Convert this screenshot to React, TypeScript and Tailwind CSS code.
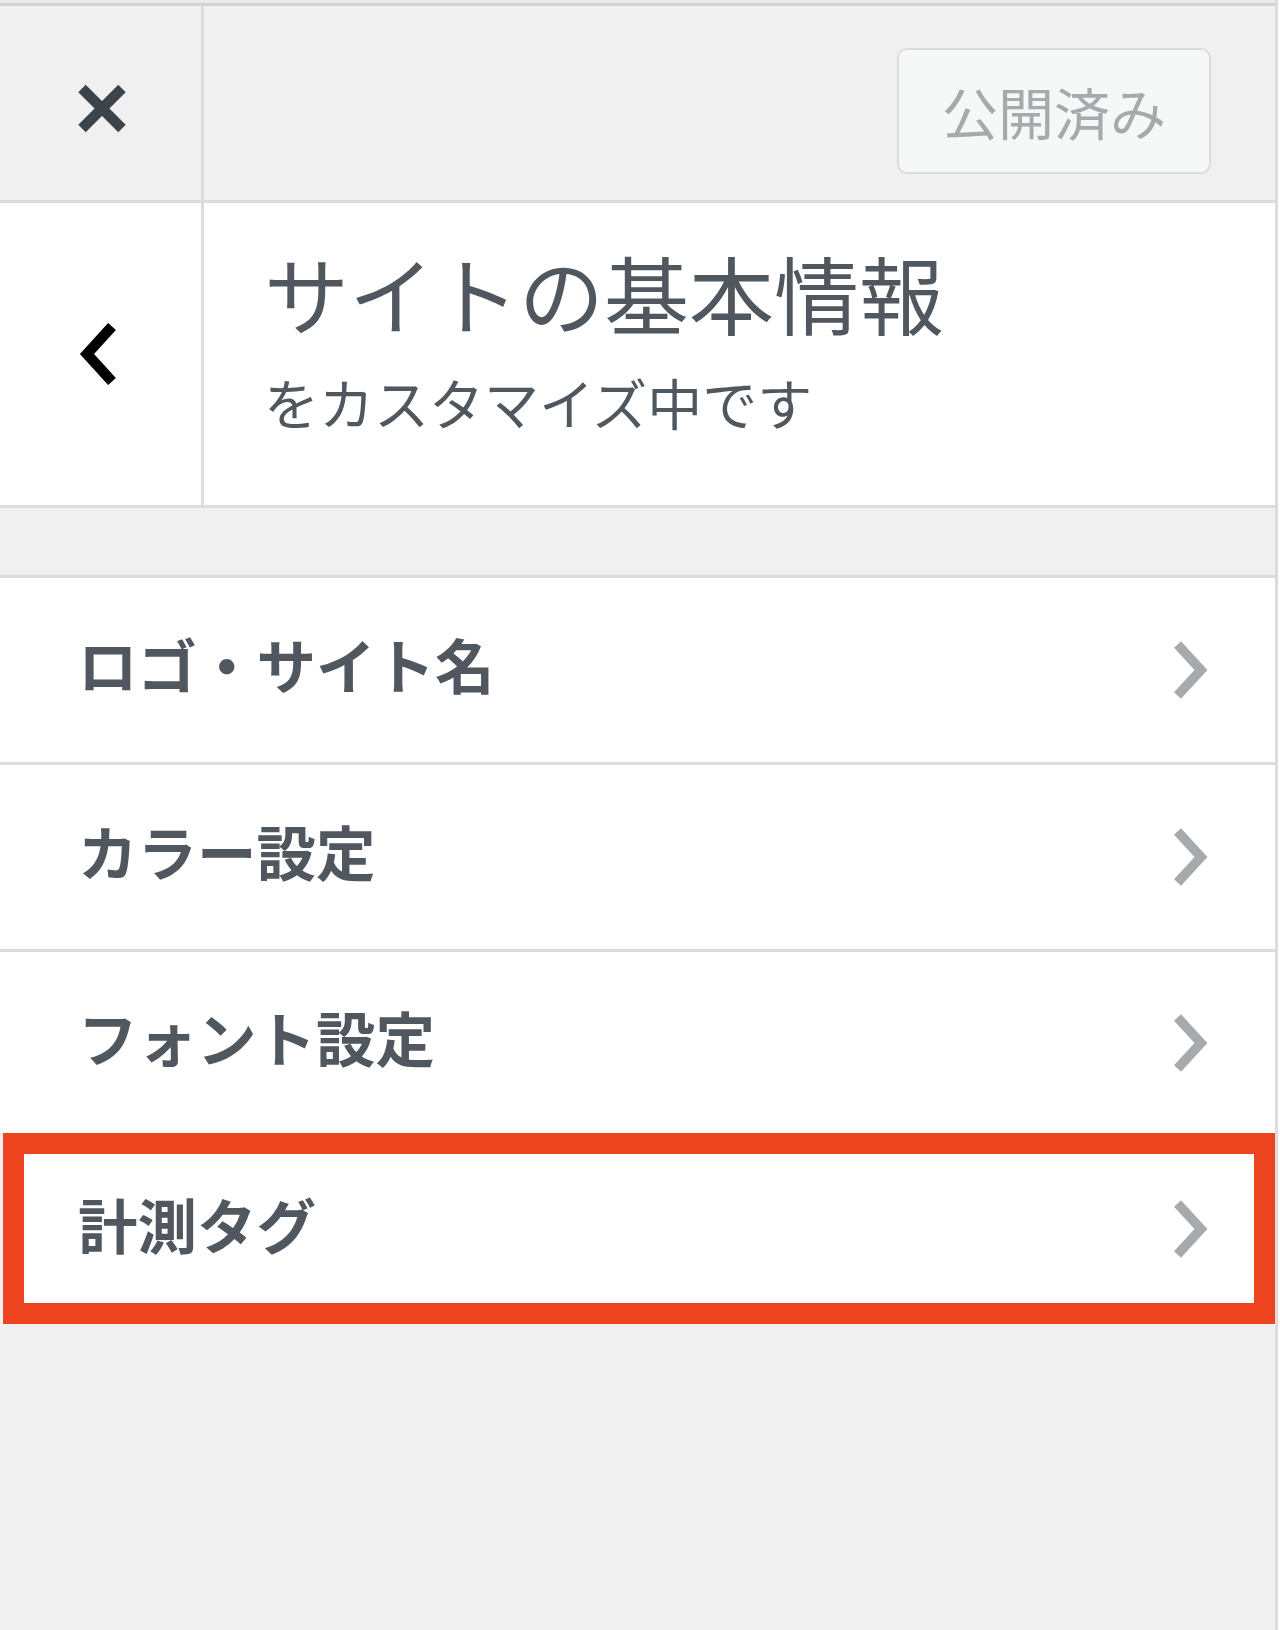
const sections = ['ロゴ・サイト名', 'カラー設定', 'フォント設定'];

function ChevronRight() {
  return (
    <svg width="36" height="58" viewBox="0 0 36 58" aria-hidden="true">
      <polyline points="5.5,3.5 29,29 5.5,54.5" fill="none" stroke="#a7aaad" strokeWidth="9.5" strokeLinejoin="miter" />
    </svg>
  );
}

function CloseIcon() {
  return (
    <svg width="48" height="49" viewBox="0 0 48 49" aria-hidden="true">
      <path d="M4 4.5 L44 44.5 M44 4.5 L4 44.5" stroke="#3c434a" strokeWidth="10.5" />
    </svg>
  );
}

function BackIcon() {
  return (
    <svg width="38" height="62" viewBox="0 0 38 62" aria-hidden="true">
      <polyline points="33,3.5 8,31 33,58.5" fill="none" stroke="#000" strokeWidth="10.5" strokeLinejoin="miter" />
    </svg>
  );
}

export default function App() {
  return (
    <div className="flex h-[1630px] w-[1280px] bg-white font-['Noto_Sans_CJK_JP','Noto_Sans',sans-serif] text-[#50575e]">
      <div className="flex h-full w-[1278px] flex-col border-r-[3px] border-[#dcdcde] bg-[#f0f0f0]">
        <div className="h-[3px] bg-[#ebebeb]" />
        <div className="h-[3px] bg-[#d2d2d4]" />

        {/* header */}
        <header className="flex h-[197px] border-b-[3px] border-[#dcdcde]">
          <div className="flex w-[204px] items-center justify-center border-r-[3px] border-[#dcdcde] pl-[3px] pt-[10px]">
            <CloseIcon />
          </div>
          <div className="flex flex-1 justify-end pr-[64px] pt-[42px]">
            <button className="flex h-[126px] w-[314px] items-center justify-center rounded-[10px] border-2 border-[#dcdcde] bg-[#f6f7f7] text-[56px] leading-none text-[#a7aaad]">
              公開済み
            </button>
          </div>
        </header>

        {/* section title */}
        <div className="flex h-[305px] border-b-[3px] border-[#dcdcde] bg-white">
          <div className="flex w-[204px] items-center justify-center border-r-[3px] border-[#dcdcde] pr-[5px]">
            <BackIcon />
          </div>
          <div className="flex-1 pl-[60px] pt-[46px]">
            <h2 className="text-[85px] font-normal leading-none">サイトの基本情報</h2>
            <p className="mt-[40px] text-[55px] leading-none">をカスタマイズ中です</p>
          </div>
        </div>

        {/* sections */}
        <ul className="mt-[67px] border-t-[3px] border-[#dcdcde]">
          {sections.map((s, i) => (
            <li
              key={s}
              className={
                i < 2
                  ? 'flex h-[187px] items-center justify-between border-b-[3px] border-[#dcdcde] bg-white pl-[78px] pr-[67px]'
                  : 'flex h-[181px] items-center justify-between bg-white pl-[78px] pr-[67px]'
              }
            >
              <span className="mb-[12px] text-[59.5px] font-bold leading-none">{s}</span>
              <ChevronRight />
            </li>
          ))}
          <li className="ml-[3px] flex h-[191px] items-center justify-between border-[21px] border-[#ee431f] bg-white pl-[54px] pr-[46px]">
            <span className="mb-[10px] text-[59.5px] font-bold leading-none">計測タグ</span>
            <ChevronRight />
          </li>
        </ul>
      </div>
    </div>
  );
}
